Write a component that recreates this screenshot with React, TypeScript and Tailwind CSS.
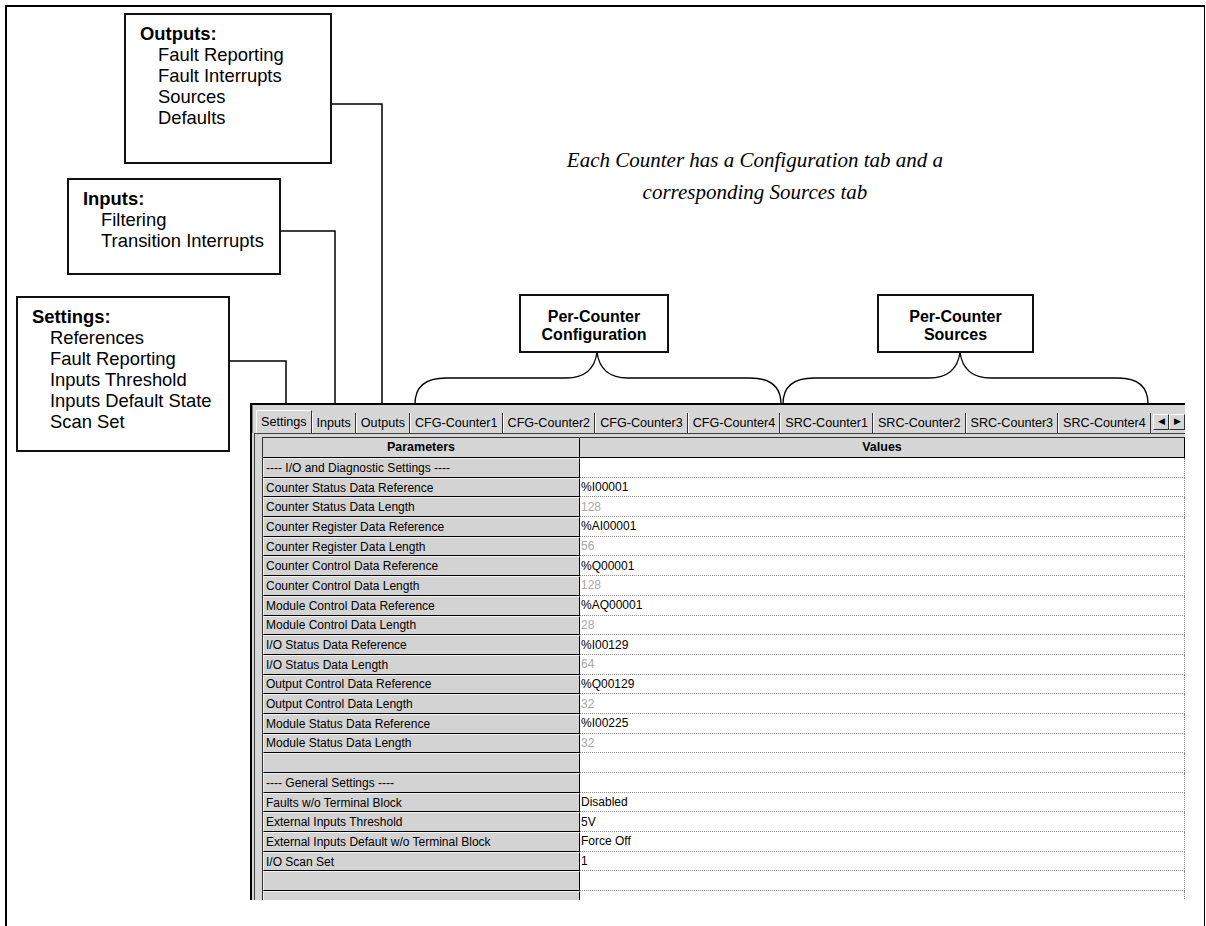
import React from 'react';

type Row = { p: string; v?: string; dim?: boolean };

const rows: Row[] = [
  { p: '---- I/O and Diagnostic Settings ----' },
  { p: 'Counter Status Data Reference', v: '%I00001' },
  { p: 'Counter Status Data Length', v: '128', dim: true },
  { p: 'Counter Register Data Reference', v: '%AI00001' },
  { p: 'Counter Register Data Length', v: '56', dim: true },
  { p: 'Counter Control Data Reference', v: '%Q00001' },
  { p: 'Counter Control Data Length', v: '128', dim: true },
  { p: 'Module Control Data Reference', v: '%AQ00001' },
  { p: 'Module Control Data Length', v: '28', dim: true },
  { p: 'I/O Status Data Reference', v: '%I00129' },
  { p: 'I/O Status Data Length', v: '64', dim: true },
  { p: 'Output Control Data Reference', v: '%Q00129' },
  { p: 'Output Control Data Length', v: '32', dim: true },
  { p: 'Module Status Data Reference', v: '%I00225' },
  { p: 'Module Status Data Length', v: '32', dim: true },
  { p: '' },
  { p: '---- General Settings ----' },
  { p: 'Faults w/o Terminal Block', v: 'Disabled' },
  { p: 'External Inputs Threshold', v: '5V' },
  { p: 'External Inputs Default w/o Terminal Block', v: 'Force Off' },
  { p: 'I/O Scan Set', v: '1' },
  { p: '' },
  { p: '' },
];

const tabs = [
  'Settings',
  'Inputs',
  'Outputs',
  'CFG-Counter1',
  'CFG-Counter2',
  'CFG-Counter3',
  'CFG-Counter4',
  'SRC-Counter1',
  'SRC-Counter2',
  'SRC-Counter3',
  'SRC-Counter4',
];

function Callout({ title, items, className }: { title: string; items: string[]; className: string }) {
  return (
    <div className={`absolute border-2 border-[#111] bg-white pl-[14px] pt-[8px] text-[18.4px] leading-[21px] text-black ${className}`}>
      <div className="font-bold">{title}</div>
      {items.map((it) => (
        <div key={it} className="pl-[18px]">
          {it}
        </div>
      ))}
    </div>
  );
}

function LabelBox({ lines, className }: { lines: string[]; className: string }) {
  return (
    <div className={`absolute flex flex-col items-center justify-center border-2 border-[#111] bg-white pt-[4px] text-[16px] font-bold leading-[18px] text-black ${className}`}>
      {lines.map((l) => (
        <span key={l}>{l}</span>
      ))}
    </div>
  );
}

export default function App() {
  return (
    <div
      className="relative h-[926px] w-[1206px] overflow-hidden bg-white"
      style={{ fontFamily: '"Liberation Sans", Arial, sans-serif' }}
    >
      {/* outer frame */}
      <div className="absolute left-[5px] top-[5px] h-[940px] w-[1200px] border-l-2 border-r border-t-2 border-black" />

      {/* connectors and braces */}
      <svg className="absolute left-0 top-0" width="1206" height="926" fill="none" stroke="#000">
        <polyline points="331,104 382,104 382,405" strokeWidth="1.5" />
        <polyline points="280,231 335,231 335,405" strokeWidth="1.5" />
        <polyline points="229,361 286,361 286,405" strokeWidth="1.5" />
        <path
          d="M415,404 C415,388 424,378 446,378 L566,378 C586,378 595,368 597,352 C599,368 608,378 628,378 L750,378 C772,378 781,388 781,404"
          strokeWidth="1.3"
        />
        <path
          d="M783,404 C783,388 792,378 814,378 L929,378 C949,378 958,368 960,352 C962,368 971,378 991,378 L1118,378 C1140,378 1148,388 1148,404"
          strokeWidth="1.3"
        />
      </svg>

      <Callout
        title="Outputs:"
        items={['Fault Reporting', 'Fault Interrupts', 'Sources', 'Defaults']}
        className="left-[124px] top-[13px] h-[151px] w-[208px]"
      />
      <Callout
        title="Inputs:"
        items={['Filtering', 'Transition Interrupts']}
        className="left-[67px] top-[178px] h-[97px] w-[214px]"
      />
      <Callout
        title="Settings:"
        items={['References', 'Fault Reporting', 'Inputs Threshold', 'Inputs Default State', 'Scan Set']}
        className="left-[16px] top-[296px] h-[156px] w-[214px]"
      />

      <LabelBox lines={['Per-Counter', 'Configuration']} className="left-[519px] top-[294px] h-[59px] w-[150px]" />
      <LabelBox lines={['Per-Counter', 'Sources']} className="left-[877px] top-[294px] h-[59px] w-[157px]" />

      <div
        className="absolute left-[530px] top-[144px] w-[450px] text-center text-[21px] italic leading-[32px] text-black"
        style={{ fontFamily: '"Liberation Serif", "Times New Roman", serif' }}
      >
        Each Counter has a Configuration tab and a
        <br />
        corresponding Sources tab
      </div>

      {/* property window */}
      <div className="absolute left-[250px] top-[403px] flex h-[497px] w-[935px] flex-col overflow-hidden border-l-2 border-t-2 border-black bg-[#d6d6d6] text-[12px] text-black">
        <div className="flex h-[28px] flex-none items-end border-l border-[#808080] pl-[3px]">
          <div className="flex min-w-0 flex-1 items-end overflow-hidden text-[12.6px]">
            {tabs.map((t, i) => (
              <div
                key={t}
                className={`flex flex-none items-center whitespace-nowrap border-r border-[#303030] ${
                  i === 0
                    ? 'h-[23px] border-l border-t border-l-white border-t-white px-[4px]'
                    : 'h-[20px] border-l border-l-white px-[4px]'
                }`}
              >
                {t}
              </div>
            ))}
          </div>
          <div className="mb-[3px] flex flex-none">
            <div className="flex h-[16px] w-[16px] items-center justify-center border border-b-[#303030] border-l-white border-r-[#303030] border-t-white bg-[#d6d6d6] text-[9px]">
              ◀
            </div>
            <div className="flex h-[16px] w-[16px] items-center justify-center border border-b-[#303030] border-l-white border-r-[#303030] border-t-white bg-[#d6d6d6] text-[9px]">
              ▶
            </div>
          </div>
        </div>

        <div className="ml-[2px] flex-1 border-l border-t border-[#404040] pl-[7px] pt-[3px]">
          <div className="grid grid-cols-[317px_605px] border-l border-t border-[#303030] bg-white">
            <div className="flex h-[20px] items-center justify-center border-b border-r border-black bg-[#d6d6d6] text-[12.5px] font-bold">
              Parameters
            </div>
            <div className="flex h-[20px] items-center justify-center border-b border-r border-black bg-[#d6d6d6] text-[12.5px] font-bold">
              Values
            </div>
            {rows.map((r, i) => (
              <React.Fragment key={i}>
                <div className="flex h-[19.7px] items-center overflow-hidden whitespace-nowrap border-b border-l border-r border-t border-b-black border-l-[#f2f2f2] border-r-black border-t-[#f2f2f2] bg-[#d3d3d3] pl-[2px]">
                  {r.p}
                </div>
                <div
                  className={`flex h-[19.7px] items-center border-b border-r border-dotted border-[#8a8a8a] pl-[1px] ${
                    r.dim ? 'text-[#a8a8a8]' : 'text-black'
                  }`}
                >
                  {r.v ?? ''}
                </div>
              </React.Fragment>
            ))}
          </div>
        </div>
      </div>
    </div>
  );
}
